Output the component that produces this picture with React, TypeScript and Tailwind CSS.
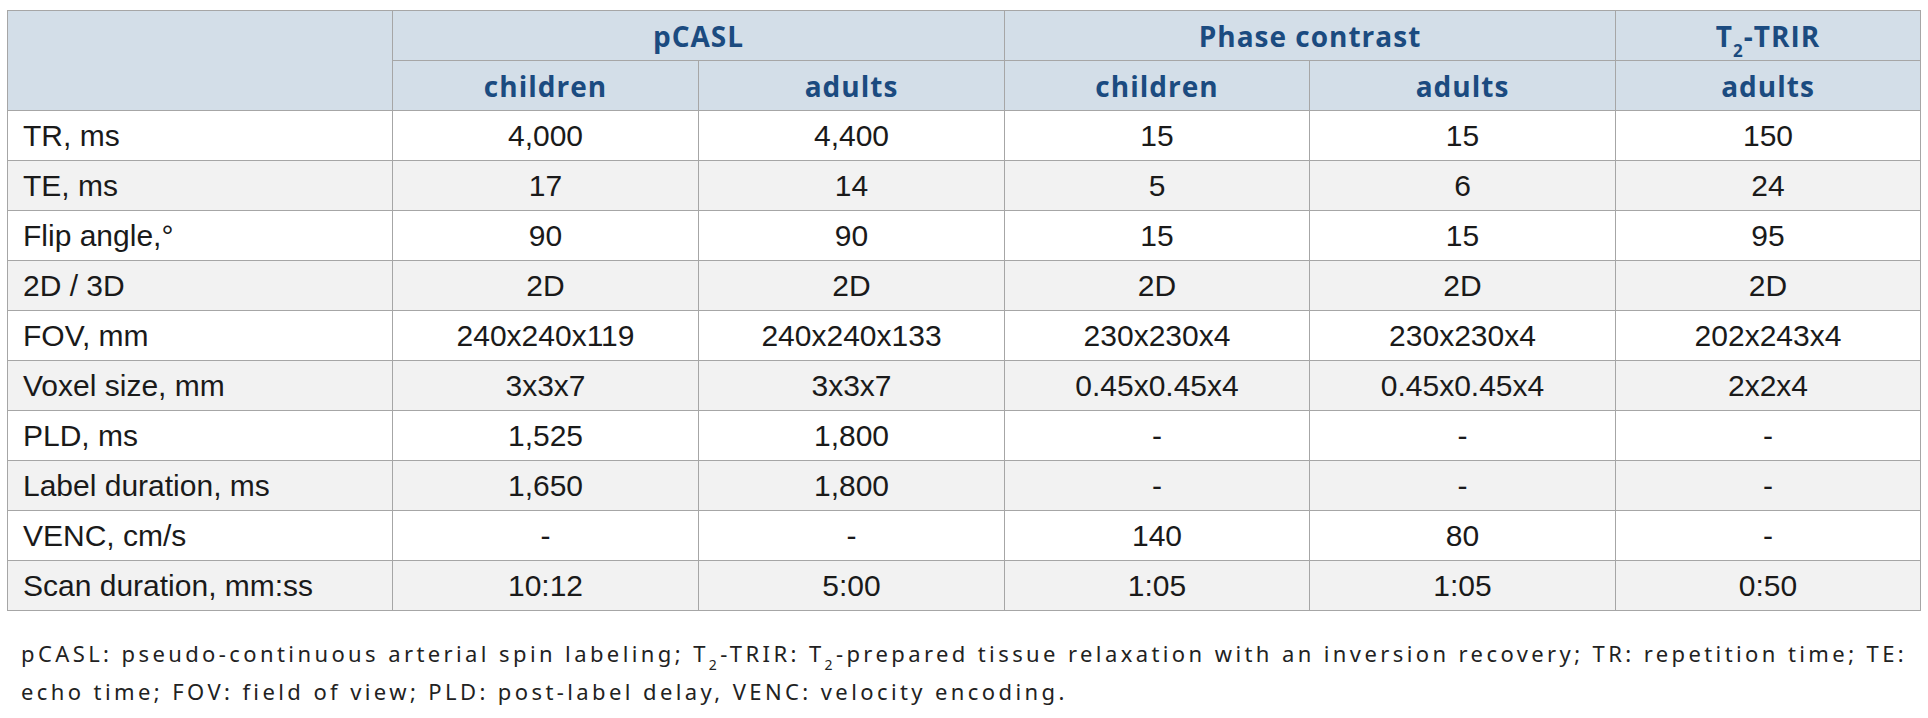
const rows: [string, string, string, string, string, string][] = [
  ["TR, ms", "4,000", "4,400", "15", "15", "150"],
  ["TE, ms", "17", "14", "5", "6", "24"],
  ["Flip angle,°", "90", "90", "15", "15", "95"],
  ["2D / 3D", "2D", "2D", "2D", "2D", "2D"],
  ["FOV, mm", "240x240x119", "240x240x133", "230x230x4", "230x230x4", "202x243x4"],
  ["Voxel size, mm", "3x3x7", "3x3x7", "0.45x0.45x4", "0.45x0.45x4", "2x2x4"],
  ["PLD, ms", "1,525", "1,800", "-", "-", "-"],
  ["Label duration, ms", "1,650", "1,800", "-", "-", "-"],
  ["VENC, cm/s", "-", "-", "140", "80", "-"],
  ["Scan duration, mm:ss", "10:12", "5:00", "1:05", "1:05", "0:50"],
];

const head = "border border-[#a6a6a6] h-[50px] p-0 text-center align-middle font-bold text-[28px] tracking-[1px] text-[#1b4b80]";
const cell = "border border-[#a6a6a6] h-[50px] p-0 text-center align-middle";

export default function App() {
  return (
    <div className="bg-white w-[1928px] h-[718px] pt-[10px]">
      <table
        className="ml-[7px] w-[1913px] table-fixed border-collapse text-[30px] text-[#1a1a1a]"
        style={{ fontFamily: '"Liberation Sans", Arial, sans-serif' }}
      >
        <colgroup>
          <col className="w-[385px]" />
          <col className="w-[306px]" />
          <col className="w-[306px]" />
          <col className="w-[305px]" />
          <col className="w-[306px]" />
          <col className="w-[305px]" />
        </colgroup>
        <thead className="bg-[#d3dee8]" style={{ fontFamily: '"Open Sans", sans-serif' }}>
          <tr>
            <th rowSpan={2} className={head}></th>
            <th colSpan={2} className={head}>pCASL</th>
            <th colSpan={2} className={head}>Phase contrast</th>
            <th className={head}>
              T<sub className="text-[17px] align-[-6px]">2</sub>-TRIR
            </th>
          </tr>
          <tr>
            <th className={head}>children</th>
            <th className={head}>adults</th>
            <th className={head}>children</th>
            <th className={head}>adults</th>
            <th className={head}>adults</th>
          </tr>
        </thead>
        <tbody>
          {rows.map((r, i) => (
            <tr key={r[0]} className={i % 2 === 1 ? "bg-[#f2f2f2]" : "bg-white"}>
              <td className={`${cell} text-left pl-[15px]`}>{r[0]}</td>
              {r.slice(1).map((v, j) => (
                <td key={j} className={cell}>{v}</td>
              ))}
            </tr>
          ))}
        </tbody>
      </table>

      <p
        className="mt-[23px] ml-[21px] text-[22px] leading-[38px] tracking-[3.4px] text-[#222]"
        style={{ fontFamily: '"Noto Sans", sans-serif' }}
      >
        pCASL: pseudo-continuous arterial spin labeling; T<sub className="text-[14px] align-[-4px]">2</sub>-TRIR: T
        <sub className="text-[14px] align-[-4px]">2</sub>-prepared tissue relaxation with an inversion recovery; TR: repetition time; TE:
        <br />
        echo time; FOV: field of view; PLD: post-label delay, VENC: velocity encoding.
      </p>
    </div>
  );
}
